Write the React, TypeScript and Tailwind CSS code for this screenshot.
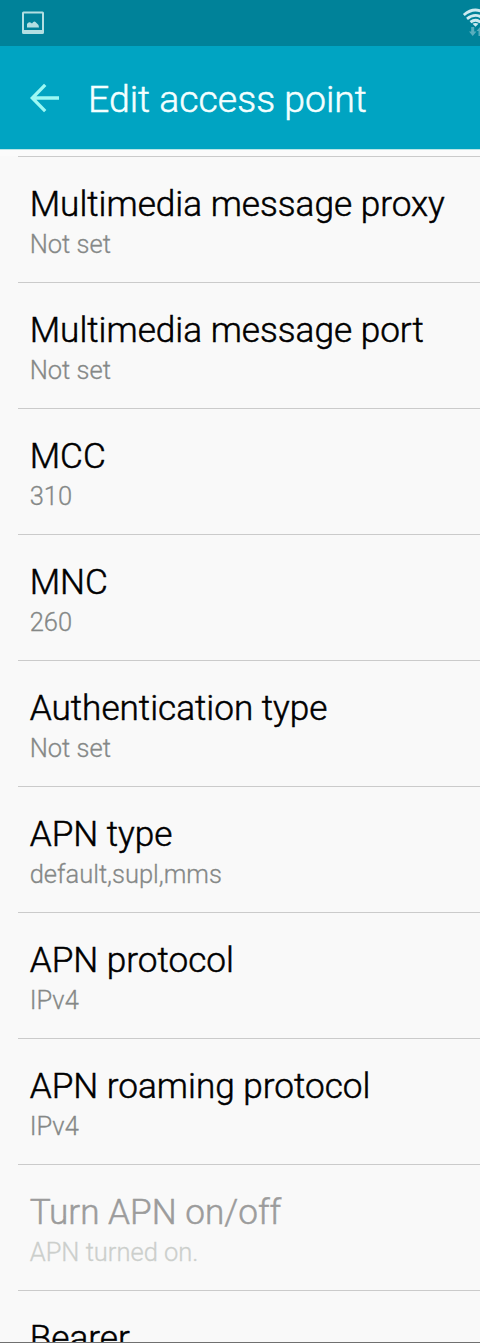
interface Setting {
    title: string;
    value: string;
    disabled?: boolean;
}

const settings: Setting[] = [
    { title: "Multimedia message proxy", value: "Not set" },
    { title: "Multimedia message port", value: "Not set" },
    { title: "MCC", value: "310" },
    { title: "MNC", value: "260" },
    { title: "Authentication type", value: "Not set" },
    { title: "APN type", value: "default,supl,mms" },
    { title: "APN protocol", value: "IPv4" },
    { title: "APN roaming protocol", value: "IPv4" },
    { title: "Turn APN on/off", value: "APN turned on.", disabled: true },
    { title: "Bearer", value: "" },
];

function StatusBar() {
    return (
        <div className="flex h-[46px] items-center justify-between overflow-hidden bg-[#008299] pl-[22px]">
            <svg width="22" height="24" viewBox="0 0 22 24" className="shrink-0">
                <path fillRule="evenodd" fill="#b3dfe2" d="M1.5 .5h19a1.500 1.500 0 0 1 1.500 1.500V21.500a1.500 1.500 0 0 1-1.500 1.500H1.500a1.500 1.500 0 0 1-1.500-1.500V2a1.500 1.500 0 0 1 1.500-1.500zM2 2.500v16.500h18V2.500z" />
                <path fill="#b3dfe2" d="M5 16.500v-3.500q1.500-2.500 3.500-1.500l1.500 1q2-3 3.500-1.500l1.500 1.500q2 1 2 4z" />
            </svg>
            <svg width="18" height="30" viewBox="0 0 18 30" fill="none" className="shrink-0">
                <path d="M1.800 7Q13.500 -3 25 7M5 10.800Q13.500 4 22 10.800M8.500 14.200Q13.500 10.300 18.500 14.200" stroke="#cdeaf0" strokeWidth="2.800" />
                <path d="M10.500 15.800Q13.500 14 16.500 15.800L13.500 18.800z" fill="#cdeaf0" />
                <path d="M9.200 19h3v4.500h2.300L10.700 28L7 23.500h2.200zM16.500 28v-5h-2L18 19v9z" fill="#58adbd" />
            </svg>
        </div>
    );
}

function Header() {
    return (
        <header className="flex h-[103px] items-center bg-[#00a4c2] pl-[30px]">
            <svg width="30" height="30" viewBox="0 0 30 30" fill="none" stroke="#9cf8f4" strokeWidth="3.300">
                <path d="M29 15H2.500M15.200 1.800L2.300 15L15.200 28.200" />
            </svg>
            <h1 className="ml-[28px] mt-0.5 text-[37.4px] leading-[42px] font-light text-[#f4ffff] [-webkit-text-stroke:0.5px]">Edit access point</h1>
        </header>
    );
}

function SettingRow({ title, value, disabled }: Setting) {
    return (
        <li className="ml-[18px] h-[126px] border-t border-[#cbcbcb] pl-[11.700px] pt-[26px]">
            <p className={`text-[35.15px] leading-[42px] font-light whitespace-nowrap [-webkit-text-stroke:0.5px] ${disabled ? "text-[#9c9c9c]" : "text-black"}`}>{title}</p>
            <p className={`text-[25.5px] leading-[38px] font-light whitespace-nowrap [-webkit-text-stroke:0.3px] ${disabled ? "text-[#cccfcc]" : "text-[#858887]"}`}>{value}</p>
        </li>
    );
}

export default function App() {
    return (
        <div className="h-[1343px] w-[480px] overflow-hidden border-b border-[#707070] bg-[#f9f9f9] font-['Roboto',sans-serif]">
            <StatusBar />
            <Header />
            <div className="h-[7px] border-t border-[#b8e5e6] bg-[#fbfbfb]" />
            <ul>
                {settings.map((setting) => (
                    <SettingRow key={setting.title} {...setting} />
                ))}
            </ul>
        </div>
    );
}
